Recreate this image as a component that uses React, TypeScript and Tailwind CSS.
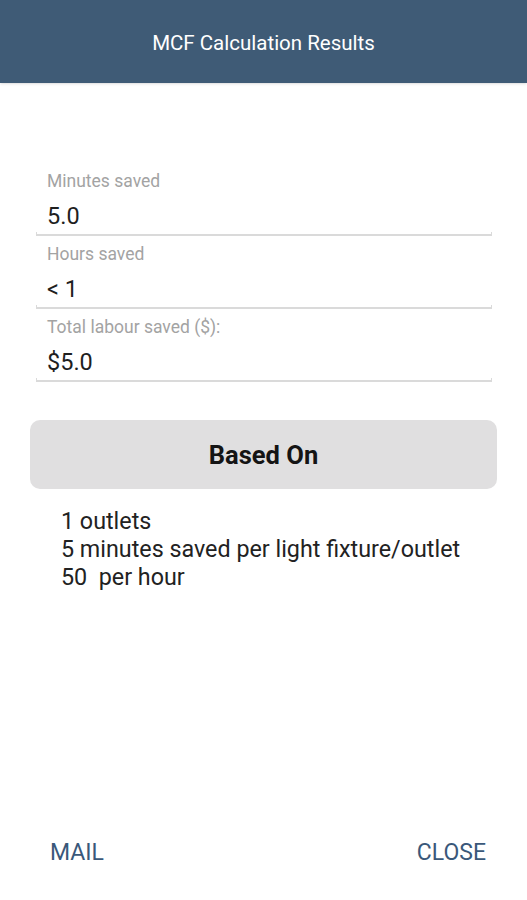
import React from "react";

const fields = [
  { label: "Minutes saved", value: "5.0" },
  { label: "Hours saved", value: "< 1" },
  { label: "Total labour saved ($):", value: "$5.0" },
];

const basis = [
  "1 outlets",
  "5 minutes saved per light fixture/outlet",
  "50  per hour",
];

const Field = ({ label, value }: { label: string; value: string }) => {
  return (
    <div className="h-[73px] flex flex-col">
      <div className="pl-[11px] pt-[7px] text-[17.5px] leading-[22px] text-[#a3a3a3]">{label}</div>
      <div className="pl-[11px] pt-[8px] text-[23.5px] leading-[32px] text-[#1f1f1f]">{value}</div>
      {/* android edittext underline with little end ticks */}
      <div className="mt-auto h-[4px] border-x border-b-2 border-[#dadada]" />
    </div>
  );
};

export default function App() {
  return (
    <div className="w-[527px] h-[900px] bg-white flex flex-col font-['Roboto',sans-serif]">
      {/* ======== Header ======== */}
      <div className="h-[83px] bg-[#3f5b76] flex items-center justify-center shadow-sm">
        <span className="text-white text-[20.5px] pt-[4px]">MCF Calculation Results</span>
      </div>

      {/* ======== Fields ======== */}
      <div className="pt-[80px] pl-[36px] pr-[35px]">
        {fields.map((f, i) => (
          <Field key={i} label={f.label} value={f.value} />
        ))}
      </div>

      {/* ======== Based on ======== */}
      <div className="px-[30px] pt-[38px]">
        <div className="h-[69px] rounded-[10px] bg-[#e0dfe0] flex items-center justify-center">
          <span className="text-[25.5px] font-bold text-[#141414] pt-[2px]">Based On</span>
        </div>
      </div>
      <div className="pl-[61px] pt-[18px] text-[23.3px] leading-[28px] text-[#222]">
        {basis.map((line, i) => (
          <div key={i} className="whitespace-pre">{line}</div>
        ))}
      </div>

      {/* ======== Footer buttons ======== */}
      <div className="mt-auto flex justify-between pl-[50px] pr-[41px] pb-[30px]">
        <span className="text-[23px] text-[#3a587a]">MAIL</span>
        <span className="text-[23px] text-[#3a587a]">CLOSE</span>
      </div>
    </div>
  );
}
